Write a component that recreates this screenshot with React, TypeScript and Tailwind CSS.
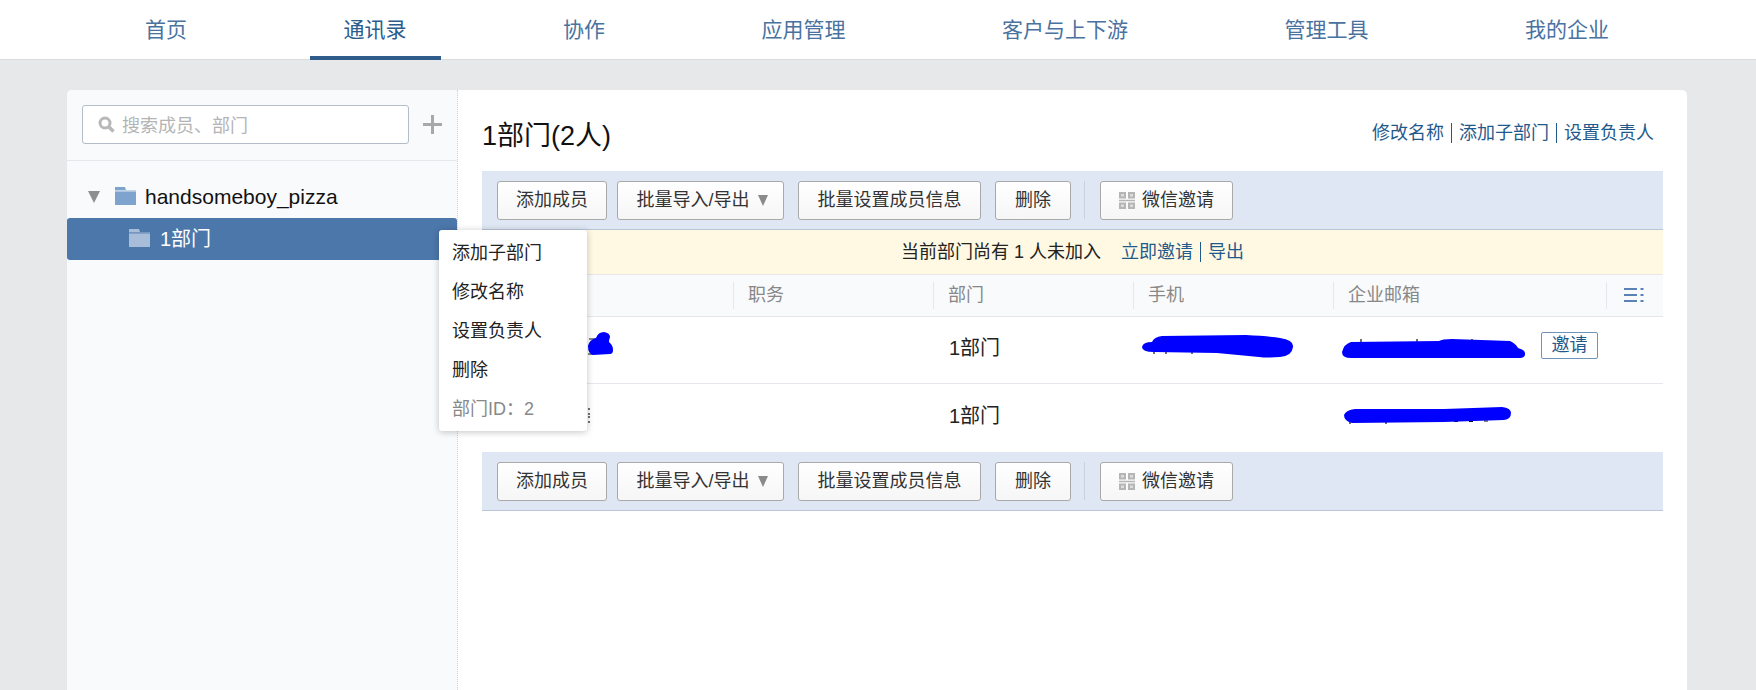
const fontStack = "font-['Liberation_Sans','Noto_Sans_CJK_SC',sans-serif]";

const navItems = ["首页", "通讯录", "协作", "应用管理", "客户与上下游", "管理工具", "我的企业"];

const tableCols = "grid grid-cols-[251px_200px_200px_200px_273px_57px]";

const Folder = ({ className }: { className: string }) => (
  <svg className={className} viewBox="0 0 21 18" fill="currentColor">
    <path d="M0 0h10l1 3H0z" />
    <path d="M0 3h21v1.500H0z" opacity="0.45" />
    <path d="M0 4.500h21V18H0z" />
  </svg>
);

const Toolbar = () => {
  const btn =
    "h-[39px] flex items-center justify-center rounded-[3px] border border-[#a9a9a9] bg-gradient-to-b from-white to-[#f6f6f6] text-[18px] text-[#333]";
  return (
    <div className="h-[59px] flex items-center px-[15px] bg-[#dee7f3] border-b border-[#b9c6d6]">
      <button className={`${btn} w-[110px]`}>添加成员</button>
      <button className={`${btn} w-[167px] ml-[10px] gap-2 pl-[3px]`}>
        批量导入/导出
        <svg width="10" height="13" viewBox="0 0 10 13" fill="#8a8a8a">
          <path d="M0 1h10L5 12z" />
        </svg>
      </button>
      <button className={`${btn} w-[183px] ml-[14px]`}>批量设置成员信息</button>
      <button className={`${btn} w-[76px] ml-[14px]`}>删除</button>
      <div className="w-px h-[38px] bg-[#c8d2de] ml-[13px] mr-[15px]" />
      <button className={`${btn} w-[133px] gap-[7px]`}>
        <svg width="16" height="17" viewBox="0 0 16 17" fill="#dcdcdc" stroke="#b5b5b5" strokeWidth="2">
          <rect x="1" y="1" width="5" height="4.500" />
          <rect x="10" y="1" width="5" height="4.500" />
          <rect x="1" y="11.500" width="5" height="4.500" />
          <rect x="10" y="11.500" width="5" height="4.500" />
          <path d="M0 8.500h16" strokeWidth="1.500" />
        </svg>
        微信邀请
      </button>
    </div>
  );
};

// hand-painted blue redaction marks from the screenshot, with the bits of text poking out
const Scribble = ({ w, h, blob, ticks, className }: { w: number; h: number; blob: string; ticks?: string; className?: string }) => (
  <svg className={className} width={w} height={h} viewBox={`0 0 ${w} ${h}`}>
    {ticks && <path d={ticks} stroke="#111" strokeWidth="1.200" fill="none" />}
    <path d={blob} fill="#0000ff" />
  </svg>
);

export default function App() {
  return (
    <div className={`h-screen overflow-hidden flex flex-col bg-[#e7e8ea] ${fontStack}`}>
      {/* Top nav */}
      <nav className="h-[60px] shrink-0 bg-white border-b border-[#dcdcdc] flex pl-[111px] gap-[88.5px]">
        {navItems.map((item) => (
          <a
            key={item}
            className={
              item === "通讯录"
                ? "flex items-center h-[60px] px-[34px] pt-[3px] text-[21px] text-[#2b5c8e] border-b-4 border-[#2f5c8a]"
                : "flex items-center h-[60px] px-[34px] pt-[3px] text-[21px] text-[#49729f] border-b-4 border-transparent"
            }
          >
            {item}
          </a>
        ))}
      </nav>

      <div className="flex flex-1 mt-[30px] ml-[67px] mr-[69px] rounded-t-[5px] bg-white">
        {/* Sidebar */}
        <aside className="w-[391px] shrink-0 bg-[#f9fafc] border-r border-dotted border-[#cfd3d9] rounded-tl-[5px]">
          <div className="h-[71px] flex items-center pb-[1px] pl-[15px] border-b border-[#e4e7eb]">
            <div className="w-[327px] h-[39px] flex items-center gap-[7px] pl-[15px] bg-white border border-[#b5bdc9] rounded-[3px]">
              <svg width="17" height="17" viewBox="0 0 17 17" fill="none" stroke="#b8b8b8">
                <circle cx="7" cy="7" r="5" strokeWidth="3" />
                <path d="M10.500 10.500L15.500 15.500" strokeWidth="3.500" />
              </svg>
              <span className="mt-[3px] text-[18px] text-[#b4b4b4]">搜索成员、部门</span>
            </div>
            <svg className="ml-[14px]" width="19" height="19" viewBox="0 0 19 19" fill="#a8a8a8">
              <path d="M8 0h3v8h8v3h-8v8H8v-8H0V8h8z" />
            </svg>
          </div>

          <div className="mt-[14px] h-[43px] flex items-center text-[#111]">
            <svg className="ml-[21px]" width="12" height="13" viewBox="0 0 12 13" fill="#8e8e8e">
              <path d="M0 1h12L6 13z" />
            </svg>
            <Folder className="w-[21px] h-[18px] ml-[15px] -mt-[2px] text-[#7fa3cf]" />
            <span className="ml-[9px] text-[21px]">handsomeboy_pizza</span>
          </div>

          <div className="relative h-[42px] flex items-center rounded-[3px] bg-[#4c77ab] text-white">
            <Folder className="w-[21px] h-[18px] ml-[62px] -mt-[2px] text-[#a8bdd7]" />
            <span className="ml-[10px] text-[20px]">1部门</span>

            {/* Department menu */}
            <div className="absolute left-[372px] top-[12px] z-10 w-[148px] h-[201px] pt-[4px] pl-[13px] bg-white rounded-[3px] shadow-[0_1px_7px_rgba(0,0,0,0.24)] text-[18px] text-[#222]">
              <div className="h-[39px] flex items-center">添加子部门</div>
              <div className="h-[39px] flex items-center">修改名称</div>
              <div className="h-[39px] flex items-center">设置负责人</div>
              <div className="h-[39px] flex items-center">删除</div>
              <div className="h-[39px] flex items-center text-[#888]">部门ID：2</div>
            </div>
          </div>
        </aside>

        {/* Main */}
        <main className="flex-1 pl-[24px] pr-[24px]">
          <div className="h-[81px] flex items-center justify-between pt-[11px] pr-[9px]">
            <h1 className="text-[27px] text-[#111]">1部门(2人)</h1>
            <div className="flex items-center text-[18px] text-[#1f5a8c] -mt-[6px]">
              修改名称
              <span className="w-px h-[20px] bg-[#1f5a8c] mx-[7px]" />
              添加子部门
              <span className="w-px h-[20px] bg-[#1f5a8c] mx-[7px]" />
              设置负责人
            </div>
          </div>

          <Toolbar />

          <div className="h-[45px] flex items-center justify-center bg-[#fff9e3] border-b border-[#e6e8ea] text-[18px] text-[#222]">
            当前部门尚有 1 人未加入
            <span className="ml-[20px] text-[#1f5a8c]">立即邀请</span>
            <span className="w-px h-[20px] bg-[#1f5a8c] mx-[7px]" />
            <span className="text-[#1f5a8c]">导出</span>
          </div>

          {/* Table */}
          <div className={`${tableCols} h-[42px] items-center pb-[1px] bg-[#f9fafc] border-b border-[#e4e7eb] text-[18px] text-[#888]`}>
            <div />
            <div className="h-[27px] flex items-center pl-[14px] border-l border-[#e4e7eb]">职务</div>
            <div className="h-[27px] flex items-center pl-[14px] border-l border-[#e4e7eb]">部门</div>
            <div className="h-[27px] flex items-center pl-[14px] border-l border-[#e4e7eb]">手机</div>
            <div className="h-[27px] flex items-center pl-[14px] border-l border-[#e4e7eb]">企业邮箱</div>
            <div className="h-[27px] flex items-center pl-[17px] border-l border-[#e4e7eb]">
              <svg width="20" height="16" viewBox="0 0 20 16" stroke="#5a82b4" strokeWidth="2">
                <path d="M0 2h13M0 8h13M0 14h13" />
                <path d="M16.500 2h3M16.500 8h3M16.500 14h3" />
              </svg>
            </div>
          </div>

          <div className={`${tableCols} h-[67px] items-center pb-[5px] border-b border-[#e4e7eb] text-[20px] text-[#222]`}>
            <div className="pl-[106px]">
              <Scribble
                className="-mt-[7px]"
                w={25}
                h={24}
                blob="M0 14Q1 8 8 6Q10 0 16 0Q22 1 22 5Q21 8 21 10Q25 13 25 18Q25 22 22 22L5 23Q0 22 0 14Z"
                ticks="M1 7h7M0 14h3M0 22h5"
              />
            </div>
            <div />
            <div className="pl-[16px]">1部门</div>
            <div className="pl-[9px]">
              <Scribble
                className="-mt-[3px]"
                w={152}
                h={24}
                blob="M0 13Q1 8 10 8Q12 3 20 2L104 1Q125 2 138 4Q152 6 151 13Q150 22 138 23Q125 24 117 23L75 19L12 18Q0 18 0 13Z"
                ticks="M12 18v2M24 18v2M50 18v2"
              />
            </div>
            <div className="flex items-center pl-[9px]">
              <Scribble
                className="mt-[2px]"
                w={183}
                h={21}
                blob="M0 14Q2 6 9 4L97 3Q100 1 110 1L168 3Q174 6 176 10Q184 12 183 17Q182 20 178 20L9 20Q0 20 0 14Z"
                ticks="M19 1v3M75 1v3M130 1v3"
              />
              <span className="ml-[16px] -mt-[4px] w-[57px] h-[27px] shrink-0 flex items-center justify-center rounded-[2px] border border-[#6f94b8] text-[18px] text-[#1f5a8c]">
                邀请
              </span>
            </div>
            <div />
          </div>

          <div className={`${tableCols} h-[68px] items-center pb-[5px] text-[20px] text-[#222]`}>
            <div className="pl-[105px]">
              <svg width="4" height="16" viewBox="0 0 4 16" stroke="#444" strokeWidth="1.500" fill="none">
                <path d="M1 1h2M1 6h2M1 9h2M1 14h2" />
              </svg>
            </div>
            <div />
            <div className="pl-[16px]">1部门</div>
            <div />
            <div className="pl-[11px]">
              <Scribble
                w={168}
                h={18}
                blob="M0 8Q2 3 11 2L100 2L158 0Q167 1 167 6Q167 12 160 13L100 15L8 16Q0 14 0 8Z"
                ticks="M6 15v2M42 15v2M110 14.500h4M125 14.500h4M140 14h4"
              />
            </div>
            <div />
          </div>

          <Toolbar />
        </main>
      </div>
    </div>
  );
}
